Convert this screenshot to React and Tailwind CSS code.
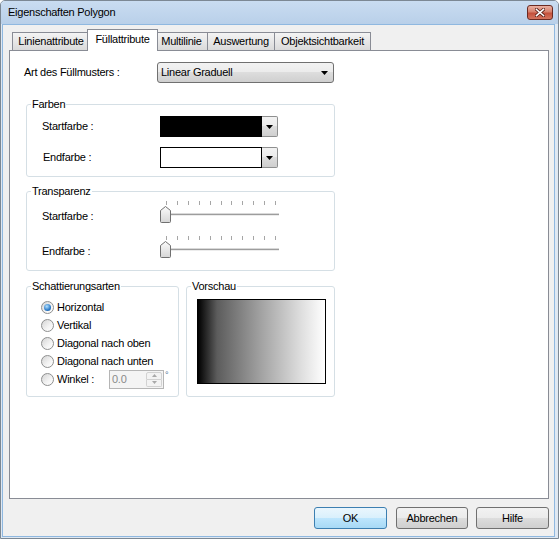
import React from 'react';

const TABS = [
  { label: 'Linienattribute', cls: 'w-[78px]' },
  { label: 'Füllattribute', active: true },
  { label: 'Multilinie', cls: 'w-[53px] ml-[-1px]' },
  { label: 'Auswertung', cls: 'w-[68px] ml-[-1px]' },
  { label: 'Objektsichtbarkeit', cls: 'w-[97px] ml-[-1px]' },
];

const SHADINGS = ['Horizontal', 'Vertikal', 'Diagonal nach oben', 'Diagonal nach unten'];

function Arrow({ color = '#000' }) {
  return (
    <svg width="7" height="4" viewBox="0 0 7 4">
      <path d="M0 0H7L3.5 4Z" fill={color} />
    </svg>
  );
}

function ComboButton() {
  return (
    <div className="flex h-full w-[16px] items-center justify-center rounded-r-[2px] border border-l-0 border-[#8e8f8f] bg-[linear-gradient(#f2f2f2,#ebebeb_50%,#dddddd_50%,#cfcfcf)]">
      <Arrow />
    </div>
  );
}

function ColorCombo({ dark }) {
  return (
    <div className="flex h-[21px] w-[118px]">
      <div className={dark ? 'flex-1 border border-black bg-black' : 'flex-1 border border-black bg-white'} />
      <ComboButton />
    </div>
  );
}

function Slider() {
  const ticks = Array.from({ length: 11 }, (_, i) => Math.round(6 + i * 10.9) + 0.5);
  return (
    <svg width="120" height="23" viewBox="0 0 120 23">
      <defs>
        <linearGradient id="thumb" x1="0" y1="0" x2="0" y2="1">
          <stop offset="0" stopColor="#fbfbfb" />
          <stop offset="1" stopColor="#d6d6d6" />
        </linearGradient>
      </defs>
      {ticks.map((x) => (
        <line key={x} x1={x} y1="0" x2={x} y2="4" stroke="#a6a6a6" strokeWidth="1" />
      ))}
      <rect x="1" y="12" width="118" height="1" fill="#d9d9d9" />
      <rect x="1" y="13" width="118" height="1" fill="#9d9d9d" />
      <rect x="1" y="14" width="118" height="1" fill="#ececec" />
      <path
        d="M0.5 20.5V9.5L5.5 5.5L10.5 9.5V20.5Q10.5 21.5 9.5 21.5H1.5Q0.5 21.5 0.5 20.5Z"
        fill="url(#thumb)"
        stroke="#707070"
      />
    </svg>
  );
}

function Radio({ checked }) {
  return (
    <div className="flex h-[13px] w-[13px] shrink-0 items-center justify-center rounded-full border border-[#8e8f8f] bg-[linear-gradient(135deg,#d4d4d4,#f4f4f4_60%,#ffffff)]">
      {checked && (
        <div className="h-[7px] w-[7px] rounded-full bg-[radial-gradient(circle_at_40%_35%,#b4e2ff,#2b7ac8_60%,#16508c)]" />
      )}
    </div>
  );
}

function SpinBox() {
  return (
    <div className="flex h-[19px] w-[55px] border border-[#b5b5b5] bg-[#f4f4f4]">
      <div className="flex-1 pl-[2px] leading-[17px] text-[#8a8a8a]">0.0</div>
      <div className="my-[1px] mr-[1px] flex w-[16px] flex-col">
        <div className="flex flex-1 items-center justify-center rounded-t-[2px] border border-[#d2d2d2] bg-[#f3f3f3]">
          <svg width="5" height="3" viewBox="0 0 5 3">
            <path d="M0 3H5L2.5 0Z" fill="#a9a9a9" />
          </svg>
        </div>
        <div className="flex flex-1 items-center justify-center rounded-b-[2px] border border-t-0 border-[#d2d2d2] bg-[#f3f3f3]">
          <svg width="5" height="3" viewBox="0 0 5 3">
            <path d="M0 0H5L2.5 3Z" fill="#a9a9a9" />
          </svg>
        </div>
      </div>
    </div>
  );
}

function Group({ title, className = '', children }) {
  return (
    <fieldset className={`rounded-[3px] border border-[#d5dfe5] ${className}`}>
      <legend className="ml-[4px] px-[1px] leading-[13px]">{title}</legend>
      {children}
    </fieldset>
  );
}

function Button({ children, primary, className = '' }) {
  return (
    <button
      type="button"
      className={`h-[22px] rounded-[3px] border text-center leading-[20px] ${
        primary
          ? 'border-[#3c7fb1] bg-[linear-gradient(#eaf6fd,#d9f0fc_50%,#bee6fd_50%,#a7d9f5)]'
          : 'border-[#707070] bg-[linear-gradient(#f2f2f2,#ebebeb_50%,#dddddd_50%,#cfcfcf)]'
      } ${className}`}
    >
      {children}
    </button>
  );
}

export default function App() {
  return (
    <div className="flex h-[539px] w-[559px] flex-col overflow-hidden rounded-t-[5px] border border-[#7c8894] bg-[#dfe8f2] font-['Liberation_Sans','Arial',sans-serif] text-[11px] tracking-[-0.25px] text-black">
      <div className="flex h-[23px] shrink-0 items-center justify-between bg-linear-to-b from-[#c9dcf1] to-[#b9d0e9] pl-[7px] pr-[5px]">
        <span>Eigenschaften Polygon</span>
        <div className="flex h-[15px] w-[26px] items-center justify-center rounded-[3px] border border-[#6b2a22] bg-[linear-gradient(#eab0a2,#d6806c_45%,#c4503b_55%,#d4755f)]">
          <svg width="10" height="9" viewBox="0 0 10 9">
            <path d="M1.5 1.5L8.5 7.5M8.5 1.5L1.5 7.5" stroke="#5a2018" strokeWidth="3.2" strokeLinecap="square" />
            <path d="M1.5 1.5L8.5 7.5M8.5 1.5L1.5 7.5" stroke="#ffffff" strokeWidth="1.6" strokeLinecap="square" />
          </svg>
        </div>
      </div>

      <div className="mb-[1px] ml-[1px] mr-[3px] flex flex-1 flex-col border border-[#8fb8e0] bg-[#f0f0f0] pl-[6px] pr-[5px] pt-[4px]">
        <div className="ml-[3px] flex h-[21px] items-end">
          {TABS.map((t) =>
            t.active ? (
              <div
                key={t.label}
                className="relative z-10 mb-[-1px] ml-[-3px] mr-[-2px] flex h-[22px] w-[71px] items-center justify-center border border-b-0 border-[#898c95] bg-white pb-[2px]"
              >
                {t.label}
              </div>
            ) : (
              <div
                key={t.label}
                className={`flex h-[18px] items-center justify-center border border-b-0 border-[#898c95] bg-linear-to-b from-[#f4f4f4] to-[#dadada] ${t.cls}`}
              >
                {t.label}
              </div>
            )
          )}
        </div>

        <div className="h-[449px] w-[540px] border border-[#898c95] bg-white pl-[14px] pt-[11px]">
          <div className="flex h-[21px] items-center">
            <span className="w-[133px]">Art des Füllmusters :</span>
            <div className="flex h-[21px] w-[177px] items-center justify-between rounded-[3px] border border-[#707070] bg-[linear-gradient(#f2f2f2,#ebebeb_50%,#dddddd_50%,#cfcfcf)] pl-[3px] pr-[5px]">
              <span>Linear Graduell</span>
              <Arrow />
            </div>
          </div>

          <div className="ml-[2px] w-[309px]">
            <Group title="Farben" className="mt-[15px]">
              <div className="pb-[8px] pl-[15px] pt-[5px]">
                <div className="flex h-[21px] items-center">
                  <span className="w-[118px]">Startfarbe :</span>
                  <ColorCombo dark />
                </div>
                <div className="mt-[10px] flex h-[21px] items-center">
                  <span className="w-[118px] pl-[1px]">Endfarbe :</span>
                  <ColorCombo />
                </div>
              </div>
            </Group>

            <Group title="Transparenz" className="mt-[8px]">
              <div className="pb-[11px] pl-[15px] pt-[3px]">
                <div className="flex items-start">
                  <span className="w-[118px] pt-[9px] leading-[13px]">Startfarbe :</span>
                  <Slider />
                </div>
                <div className="mt-[12px] flex items-start">
                  <span className="w-[118px] pt-[9px] leading-[13px]">Endfarbe :</span>
                  <Slider />
                </div>
              </div>
            </Group>

            <div className="mt-[9px] flex gap-[7px]">
              <Group title="Schattierungsarten" className="w-[153px]">
                <div className="pb-[8px] pl-[14px] pt-[5px]">
                  {SHADINGS.map((s, i) => (
                    <div key={s} className="flex h-[18px] items-center gap-[3px]">
                      <Radio checked={i === 0} />
                      <span>{s}</span>
                    </div>
                  ))}
                  <div className="flex h-[18px] items-center gap-[3px]">
                    <Radio />
                    <span className="w-[49px]">Winkel :</span>
                    <SpinBox />
                    <span className="mb-[6px] ml-[-2px] text-[9px] text-[#4d6f94]">°</span>
                  </div>
                </div>
              </Group>

              <Group title="Vorschau" className="w-[149px]">
                <div className="pl-[10px] pt-[6px]">
                  <div className="h-[85px] w-[129px] border border-black bg-[linear-gradient(to_right,#000000,#5c5c5c_15%,#a3a3a3_50%,#dcdcdc_80%,#ffffff)]" />
                </div>
              </Group>
            </div>
          </div>
        </div>

        <div className="mt-[8px] flex justify-end">
          <Button primary className="mr-[9px] w-[73px]">OK</Button>
          <Button className="mr-[8px] w-[72px]">Abbrechen</Button>
          <Button className="w-[73px]">Hilfe</Button>
        </div>
      </div>
    </div>
  );
}
